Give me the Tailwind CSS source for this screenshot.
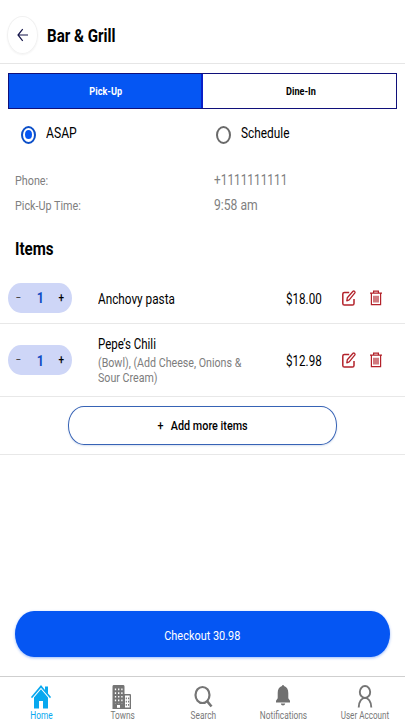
<!DOCTYPE html>
<html lang="en">
<head>
<meta charset="utf-8">
<title>Bar &amp; Grill</title>
<script src="https://cdn.jsdelivr.net/npm/@tailwindcss/browser@4"></script>
</head>
<body class="bg-white">
<svg class="hidden">
  <symbol id="edit" viewBox="0 0 14 16"><path d="M7.2 2.4H2.4Q.8 2.4.8 4v9.4q0 1.600 1.600 1.600h8q1.600 0 1.600-1.600V9" fill="none" stroke="#b3222a" stroke-width="1.500"/><path d="m4.800 10.800.5-3L11 1.300q.8-.7 1.600.1t.1 1.800L7.200 9.900Z" fill="#fff" stroke="#b3222a" stroke-width="1.300" stroke-linejoin="round"/></symbol>
  <symbol id="trash" viewBox="0 0 12 16"><path d="M0 3.200h12M3.600 3V1.200h4.800V3M1.400 3.500v11.200h9.200V3.500M4 5.800v6.600M6 5.800v6.600M8 5.800v6.600" fill="none" stroke="#b3222a" stroke-width="1.200"/></symbol>
</svg>
<div class="flex h-[720px] w-[405px] flex-col overflow-hidden bg-white font-['Roboto',sans-serif] text-black">
  <header class="flex h-16 shrink-0 items-start border-b border-[#e6e6e6] pt-4 pl-[7px]">
    <div class="flex h-[38px] w-[31px] items-center justify-center rounded-[50%] border border-[#f1f1f1] shadow-[0_1px_2px_#0000000d]">
      <svg class="h-[14px] w-[11px]" viewBox="0 0 11 14" fill="none" stroke="#15154a" stroke-width="1.2"><path d="M11 7H1M5.7 1.2 1 7l4.7 5.8"/></svg>
    </div>
    <h1 class="mt-2 ml-[9px] w-[100px] origin-left scale-x-[.84] text-[18px] leading-6 font-bold whitespace-nowrap">Bar &amp; Grill</h1>
  </header>
  <div class="mx-2 mt-[9px] grid h-9 shrink-0 grid-cols-2 border border-[#10107a] text-[11px] font-bold">
    <div class="flex items-center justify-center border-r-2 border-[#0a20c8] bg-[#0556f3] pt-[2px] pl-[2px] text-white"><span class="scale-x-[.83]">Pick-Up</span></div>
    <div class="flex items-center justify-center pt-[2px] pl-[3px]"><span class="scale-x-[.83]">Dine-In</span></div>
  </div>
  <div class="flex h-[51px] shrink-0 items-center pl-[21px] text-[15px]">
    <div class="flex w-[195px] items-center">
      <span class="flex h-[18px] w-[15px] items-center justify-center rounded-[50%] border-2 border-[#0c4fc8]"><span class="h-[9px] w-[7px] rounded-[50%] bg-[#0556f3]"></span></span>
      <span class="-mt-[2px] ml-[10px] origin-left scale-x-[.81]">ASAP</span>
    </div>
    <span class="h-[18px] w-[15px] rounded-[50%] border-2 border-[#6a6a6a]"></span>
    <span class="-mt-[2px] ml-[10px] origin-left scale-x-[.79]">Schedule</span>
  </div>
  <div class="mt-2 grid shrink-0 grid-cols-[199px_1fr] pl-[15px] text-[#808080]">
    <span class="h-[25px] origin-left scale-x-[.83] text-[13px] leading-[25px]">Phone:</span>
    <span class="h-[25px] origin-left scale-x-[.79] text-[15px] leading-[25px]">+1111111111</span>
    <span class="h-[25px] origin-left scale-x-[.83] text-[13px] leading-[25px]">Pick-Up Time:</span>
    <span class="h-[25px] origin-left scale-x-[.81] text-[15px] leading-[25px]">9:58 am</span>
  </div>
  <h2 class="mt-[19px] ml-[15px] h-6 origin-left scale-x-[.84] text-[18px] leading-6 font-bold">Items</h2>
  <div class="mt-[13px] flex h-[50px] shrink-0 items-center border-b border-[#e8e8e8] pb-[2px]">
    <div class="ml-2 flex h-[30px] w-16 shrink-0 items-center justify-between rounded-[13px/15px] bg-[#ced6f7] pr-[7px] pl-[7px]">
      <span class="scale-x-[.83] text-[12px] text-[#444]">−</span><span class="scale-x-[.83] pt-[2px] text-[15px] font-bold text-[#0f4dc4]">1</span><span class="scale-x-[.83] text-[12px] font-medium">+</span>
    </div>
    <div class="ml-[26px] w-[188px]"><div class="origin-left scale-x-[.84] pt-[3px] text-[14px] leading-5">Anchovy pasta</div></div>
    <span class="w-[56px] origin-left scale-x-[.83] pt-[3px] text-[14px] leading-5">$18.00</span>
    <svg class="h-4 w-[14px]"><use href="#edit"/></svg>
    <svg class="ml-[14px] h-4 w-3"><use href="#trash"/></svg>
  </div>
  <div class="flex h-[73px] shrink-0 items-center border-b border-[#e8e8e8]">
    <div class="ml-2 flex h-[30px] w-16 shrink-0 items-center justify-between rounded-[13px/15px] bg-[#ced6f7] pr-[7px] pl-[7px]">
      <span class="scale-x-[.83] text-[12px] text-[#444]">−</span><span class="scale-x-[.83] pt-[2px] text-[15px] font-bold text-[#0f4dc4]">1</span><span class="scale-x-[.83] text-[12px] font-medium">+</span>
    </div>
    <div class="ml-[26px] w-[188px]">
      <div class="origin-left scale-x-[.82] whitespace-nowrap">
        <div class="-mt-px mb-px text-[14px] leading-5">Pepe’s Chili</div>
        <div class="text-[13px] leading-[15px] text-[#7d7d7d]">(Bowl), (Add Cheese, Onions &amp;<br>Sour Cream)</div>
      </div>
    </div>
    <span class="w-[56px] origin-left scale-x-[.83] pt-[2px] text-[14px] leading-5">$12.98</span>
    <svg class="h-4 w-[14px]"><use href="#edit"/></svg>
    <svg class="ml-[14px] h-4 w-3"><use href="#trash"/></svg>
  </div>
  <div class="flex h-[58px] shrink-0 items-center justify-center border-b border-[#e8e8e8]">
    <button class="flex h-[39px] w-[269px] items-center justify-center rounded-[16px/19px] border border-[#3763b5] pt-px text-[13px] font-medium shadow-[0_1px_2px_#3763b533]"><span class="mr-[7px] scale-x-[.83]">+</span><span class="-mx-[8px] scale-x-[.83] whitespace-nowrap">Add more items</span></button>
  </div>
  <button class="mt-[156px] ml-[15px] flex h-[46px] w-[375px] shrink-0 items-center justify-center rounded-[19px/23px] bg-[#0556f3] pt-[3px] text-[13px] text-white shadow-[0_1px_3px_#0556f366]"><span class="scale-x-[.84]">Checkout 30.98</span></button>
  <nav class="mt-[19px] grid h-11 shrink-0 grid-cols-5 border-t border-[#cfcfcf] pl-px text-[10px] leading-3 text-[#787878]">
    <div class="flex flex-col items-center pt-2 text-[#08a8ef]">
      <svg class="h-6 w-5" viewBox="0 0 20 24" fill="#08a8ef"><path d="M10 0 0 12l1 1.300L10 2.700l9 10.600 1-1.300-3-3.600V1.500h-3V5Z"/><path d="m10 4.300-7 8.300V23.500h5V16h4v7.500h5V12.600Z"/></svg>
      <span class="mt-[1px] scale-x-[.83] whitespace-nowrap">Home</span>
    </div>
    <div class="flex flex-col items-center pt-2">
      <svg class="h-6 w-5" viewBox="0 0 20 24"><path d="M1.500 0h10q1 0 1 1.500V9H18q1 0 1 1.200V24H.5V1.500Q.5 0 1.500 0Z" fill="#757575"/><path d="M13 10.500h4.700v12H13Z" fill="#fff"/><path d="M3.500 3.500v15M6.700 3.500v15M9.900 3.500v15" stroke="#fff" stroke-width="1.300" stroke-dasharray="1.700 2"/><path d="M14.300 12.500v9M16.600 12.500v9" stroke="#757575" stroke-width="1.100" stroke-dasharray="1.700 1.600"/><path d="M5 20h3v2.800H5Z" fill="#fff"/></svg>
      <span class="mt-[1px] scale-x-[.83] whitespace-nowrap">Towns</span>
    </div>
    <div class="flex flex-col items-center pt-2">
      <svg class="h-6 w-5" viewBox="0 0 20 24" fill="none" stroke="#757575"><ellipse cx="9.500" cy="10" rx="7" ry="8" stroke-width="2.200"/><path d="m14 16 4.500 5.500" stroke-width="2.600"/></svg>
      <span class="mt-[1px] scale-x-[.83] whitespace-nowrap">Search</span>
    </div>
    <div class="flex flex-col items-center pt-2">
      <svg class="h-6 w-5" viewBox="0 0 20 24" fill="#707070"><path d="M8 1q0-1 1-1t1 1c3 .8 4.300 3.600 4.300 7v5.200L16 15.800v1.700H2v-1.700l1.700-2.600V8C3.700 4.600 5 1.800 8 1ZM6.800 18.500h4.400Q11 20.500 9 20.500T6.800 18.500Z"/></svg>
      <span class="mt-[1px] scale-x-[.83] whitespace-nowrap">Notifications</span>
    </div>
    <div class="flex flex-col items-center pt-2">
      <svg class="h-6 w-5" viewBox="0 0 20 24" fill="none" stroke="#757575" stroke-width="1.900"><ellipse cx="10" cy="7" rx="5.200" ry="6"/><path d="M3.700 22.500C4 9.700 16 9.700 16.300 22.500"/></svg>
      <span class="mt-[1px] scale-x-[.81] whitespace-nowrap">User Account</span>
    </div>
  </nav>
</div>
</body>
</html>
